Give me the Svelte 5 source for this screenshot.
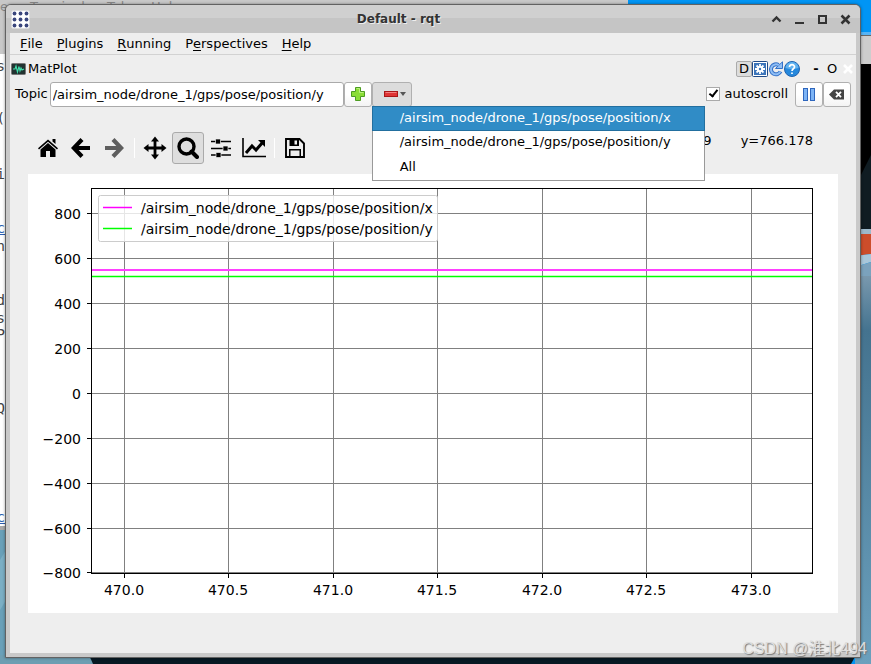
<script>
  const topics = ['/airsim_node/drone_1/gps/pose/position/x', '/airsim_node/drone_1/gps/pose/position/y'];
  const menus = [['', 'F', 'ile'], ['', 'P', 'lugins'], ['', 'R', 'unning'], ['P', 'e', 'rspectives'], ['', 'H', 'elp']];
  const xs = [[96, '470.0'], [200, '470.5'], [305, '471.0'], [409, '471.5'], [514, '472.0'], [618, '472.5'], [723, '473.0']];
  const ys = [[39, '800'], [84, '600'], [129, '400'], [174, '200'], [219, '0'], [264, '−200'], [309, '−400'], [354, '−600'], [398, '−800']];
  const dots = [3, 9, 15];
  const fragments = [['s', 57], ['(', 109], ['i', 165], ['c', 219, 1], ['n', 237], ['d', 291], ['s', 309], ['P', 325], ['Q', 399], ['c', 508, 1]];
  let topic = $state(topics[1]);
  let autoscroll = $state(true);
</script>

<div class="desktop">
  <svg class="wallpaper" viewBox="0 0 871 664" preserveAspectRatio="none" aria-hidden="true">
    <defs>
      <linearGradient id="sea" x1="0" y1="0" x2="0" y2="1">
        <stop offset="0" stop-color="#7d9bb0" /><stop offset=".15" stop-color="#44738f" /><stop offset="1" stop-color="#6ba0bd" />
      </linearGradient>
    </defs>
    <rect width="871" height="664" fill="#0095f5" />
    <rect x="855" y="32" width="16" height="4" fill="#56b4f5" />
    <rect x="855" y="35" width="16" height="30" fill="#cdcdcd" />
    <path d="M855 35.500H871" stroke="#666" />
    <rect x="855" y="64" width="16" height="166" fill="#000" />
    <path d="M861 175L871 155V230H861Z" fill="#101c22" />
    <rect x="855" y="272" width="16" height="392" fill="url(#sea)" />
    <path d="M855 229H871V234H855Z" fill="#9db9cb" />
    <path d="M855 234H871V254L855 256Z" fill="#cc4d2b" />
    <path d="M855 256L871 254V262L855 267Z" fill="#a9c7da" />
    <path d="M855 267L871 262V276H855Z" fill="#7ba2bd" />
    <path d="M0 528H20V664H0Z" fill="#69a0b9" />
    <path d="M0 560L6 550V600L0 610Z" fill="#7bafc5" />
    <path d="M0 655H94V664H0Z" fill="#6d9eb2" />
    <path d="M89 655H856L851 664H93Z" fill="#071923" />
  </svg>

  <div class="behind" aria-hidden="true">
    <div class="behind-bar"><span>e</span><span>Terminal</span><span>Tab</span><span>Help</span></div>
    {#each fragments as [t, y, link]}
      <span class="fragment" class:link style="top:{y}px">{t}</span>
    {/each}
  </div>

  <main class="window">
    <header class="titlebar">
      <svg class="app" width="19" height="19" viewBox="0 0 19 19" aria-hidden="true">
        <rect x=".5" y=".5" width="18" height="18" rx="2" fill="#fff" stroke="#ddd" />
        {#each dots as y}{#each dots as x}<circle cx={x + .5} cy={y + .5} r="1.9" fill="#39457c" />{/each}{/each}
      </svg>
      <h1>Default - rqt</h1>
      <div class="winbtns">
        <button aria-label="Roll up"><svg width="11" height="11" viewBox="0 0 11 11"><path d="M1.500 7.500L5.500 3.500L9.500 7.500" fill="none" stroke="#333" stroke-width="2.400" /></svg></button>
        <button aria-label="Minimize"><svg width="11" height="11" viewBox="0 0 11 11"><path d="M1 9H10" stroke="#333" stroke-width="2" /></svg></button>
        <button aria-label="Maximize"><svg width="11" height="11" viewBox="0 0 11 11"><rect x="2" y="2" width="7" height="7" fill="none" stroke="#333" stroke-width="2" /></svg></button>
        <button aria-label="Close"><svg width="11" height="11" viewBox="0 0 11 11"><path d="M1.500 1.500L9.500 9.500M9.500 1.500L1.500 9.500" stroke="#333" stroke-width="2.500" /></svg></button>
      </div>
    </header>

    <div class="content">
      <nav class="menubar">
        {#each menus as [a, u, b]}<button>{a}<u>{u}</u>{b}</button>{/each}
      </nav>

      <div class="dock">
        <svg width="15" height="12" viewBox="0 0 15 12" aria-hidden="true">
          <rect x=".5" y=".5" width="14" height="11" rx="1" fill="#223331" stroke="#777" />
          <path d="M2 6H4L5 3L6.500 9L8 3.500L9 8L10 5L11 7L13 6" fill="none" stroke="#42e0ad" stroke-width="1.100" />
        </svg>
        <h2>MatPlot</h2>
        <div class="dock-tools">
          <button class="d">D</button>
          <button aria-label="Settings"><svg width="16" height="16" viewBox="0 0 16 16"><rect x=".5" y=".5" width="15" height="15" rx="1" fill="#fff" stroke="#204a87" /><rect x="2" y="2" width="12" height="12" fill="#3b74ba" /><path d="M8 3V13M3 8H13M4.500 4.500L11.500 11.500M11.500 4.500L4.500 11.500" stroke="#fff" stroke-width="1.800" /><circle cx="8" cy="8" r="3.200" fill="#fff" /><circle cx="8" cy="8" r="1.200" fill="#3b74ba" /></svg></button>
          <button aria-label="Reload"><svg width="16" height="16" viewBox="0 0 16 16"><path d="M10.500 4A5 5 0 1 0 12.500 10.500" fill="none" stroke="#3572c8" stroke-width="4" /><path d="M7.500 7.500H14.500V.8Z" fill="#8fbef5" stroke="#3572c8" stroke-linejoin="round" /><path d="M10.800 4.200A5 5 0 1 0 12.300 10.800" fill="none" stroke="#8fbef5" stroke-width="2" /></svg></button>
          <button aria-label="Help"><svg width="16" height="16" viewBox="0 0 16 16"><circle cx="8" cy="8" r="7.500" fill="#2688dc" stroke="#2163ae" /><path d="M1.500 7A6.500 6 0 0 1 14.500 7Q8 9 1.500 7Z" fill="#62b3f0" /><path d="M5.500 6C5.500 2.800 10.700 3 10.500 6C10.400 7.800 8 7.800 8 10M8 11.500V13" fill="none" stroke="#fff" stroke-width="1.700" /></svg></button>
          <button class="dash"><b>-</b></button>
          <button class="o">O</button>
          <button aria-label="Close panel"><svg width="10" height="10" viewBox="0 0 10 10"><path d="M1 1L9 9M9 1L1 9" stroke="#fff" stroke-width="2.600" /></svg></button>
        </div>
      </div>

      <div class="topicbar">
        <label class="name" for="topic">Topic</label>
        <input id="topic" type="text" bind:value={topic} />
        <button class="tool add" aria-label="Add topic"><svg width="14" height="14" viewBox="0 0 14 14"><path d="M4.500 .5H9.500V4.500H13.500V9.500H9.500V13.500H4.500V9.500H.5V4.500H4.500Z" fill="#8add36" stroke="#4d9c22" /><path d="M5.500 1.500H8.500V5.500H12.500" fill="none" stroke="#bcf27e" /></svg></button>
        <div class="remove">
          <button class="tool pressed" aria-label="Remove topic" aria-expanded="true">
            <svg width="14" height="6" viewBox="0 0 14 6"><rect x=".5" y=".5" width="13" height="5" fill="#df3434" stroke="#a81616" /><path d="M1.500 1.500H12.500" stroke="#f28080" /></svg>
            <svg width="6" height="4" viewBox="0 0 6 4"><path d="M0 0H6L3 4Z" fill="#555" /></svg>
          </button>
          <div class="popup" role="menu">
            {#each [...topics, 'All'] as item, i}<button role="menuitem" class:active={i === 0}>{item}</button>{/each}
          </div>
        </div>
        <label class="auto"><input type="checkbox" bind:checked={autoscroll} />autoscroll</label>
        <button class="tool pause" aria-label="Pause"><svg width="12" height="13" viewBox="0 0 12 13"><g fill="#7db4f5" stroke="#2e66bd"><rect x=".5" y=".5" width="4" height="12" /><rect x="7.500" y=".5" width="4" height="12" /></g></svg></button>
        <button class="tool clear" aria-label="Clear"><svg width="16" height="11" viewBox="0 0 16 11"><path d="M5 .5H15V10.500H5L0 5.500Z" fill="#444" /><path d="M7 2.800L12 8.200M12 2.800L7 8.200" stroke="#fff" stroke-width="1.800" /></svg></button>
      </div>

      <div class="plotbar">
        <button aria-label="Home"><svg width="22" height="20" viewBox="0 0 22 20"><path d="M11 5L18.500 11.500V19H13V13H9V19H3.500V11.500ZM1 10.300L11 1.600L21 10.300L20 11.500L11 3.800L2 11.500ZM15.500 1H18.500V6L15.500 3.500Z" /></svg></button>
        <button aria-label="Back"><svg width="20" height="20" viewBox="0 0 20 20"><path d="M11 1.500L2.800 10L11 18.500M3 10H19" fill="none" stroke="#000" stroke-width="4.200" /></svg></button>
        <button aria-label="Forward" disabled><svg width="20" height="20" viewBox="0 0 20 20"><path d="M9 1.500L17.200 10L9 18.500M17 10H1" fill="none" stroke="#5e5e5e" stroke-width="4.200" /></svg></button>
        <i></i>
        <button aria-label="Pan"><svg width="24" height="24" viewBox="0 0 24 24"><path d="M12 3V21M3 12H21" stroke="#000" stroke-width="2.800" /><path d="M12 .5L16 5.500H8ZM12 23.500L8 18.500H16ZM.5 12L5.500 8V16ZM23.500 12L18.500 16V8Z" /></svg></button>
        <button class="on" aria-label="Zoom"><svg width="22" height="22" viewBox="0 0 22 22"><circle cx="9.500" cy="9.500" r="7.500" fill="none" stroke="#000" stroke-width="3.400" /><path d="M14.500 14.500L20 20" stroke="#000" stroke-width="4" stroke-linecap="round" /></svg></button>
        <button aria-label="Subplots"><svg width="20" height="20" viewBox="0 0 20 20"><path d="M0 3.500H20M0 10.500H20M0 17H20" stroke="#000" stroke-width="1.600" /><path d="M4.500 1H9.500V6H4.500ZM12 8H17V13H12ZM5 14.500H10V19.500H5Z" stroke="#eee" stroke-width=".7" /></svg></button>
        <button aria-label="Customize"><svg width="24" height="20" viewBox="0 0 24 20"><path d="M1 0V18.500H24" fill="none" stroke="#000" stroke-width="1.600" /><path d="M4 15L10 8L14 12L21 4" fill="none" stroke="#000" stroke-width="3" /><path d="M16 2H23V9Z" /></svg></button>
        <i></i>
        <button aria-label="Save"><svg width="20" height="20" viewBox="0 0 20 20"><path d="M1 1H14.500L19 5.500V19H1Z" fill="none" stroke="#000" stroke-width="1.900" /><path d="M4.500 1H14V8H4.500ZM4 11H16V19H4Z" /><path d="M9.500 2.500H12V6.500H9.500ZM5.500 12.500H14.500V18H5.500Z" fill="#eee" /></svg></button>
        <output><span>x=472.799</span><span>y=766.178</span></output>
      </div>

      <svg class="figure" viewBox="0 0 810 439" role="img" aria-label="Position plot">
        <rect width="810" height="439" fill="#fff" />
        <g stroke="#808080">
          {#each xs as [x]}<path d="M{x + .5} 14V399" />{/each}
          {#each ys as [y]}<path d="M64 {y + .5}H784" />{/each}
        </g>
        <path d="M64 96H784" stroke="#ff40ff" stroke-width="2" />
        <path d="M64 102.500H784" stroke="#00ff00" stroke-width="1.500" />
        <rect x="63.500" y="14.500" width="721" height="385" fill="none" stroke="#000" />
        <g stroke="#000">
          {#each xs as [x]}<path d="M{x + .5} 399V404" />{/each}
          {#each ys as [y]}<path d="M59 {y + .5}H64" />{/each}
        </g>
        <g text-anchor="middle">{#each xs as [x, t]}<text {x} y="421">{t}</text>{/each}</g>
        <g text-anchor="end">{#each ys as [y, t]}<text x="53" y={y + 6}>{t}</text>{/each}</g>
        <rect x="70.500" y="21.500" width="339" height="46" rx="2" fill="#fff" fill-opacity=".8" stroke="#ccc" />
        <path d="M75 33.500H104" stroke="#ff00ff" stroke-width="1.500" />
        <path d="M75 54.500H104" stroke="#00ff00" stroke-width="1.500" />
        {#each topics as t, i}<text x="113" y={39 + i * 21}>{t}</text>{/each}
      </svg>
    </div>
  </main>
  <span class="watermark">CSDN @淮北494</span>
</div>

<style>
  :global(body) { margin: 0; }
  .desktop { position: relative; min-height: 100vh; box-sizing: border-box; padding: 4px 10px 6px 5px; overflow: hidden; display: flex; font: 13px/16px "DejaVu Sans", sans-serif; color: #000; }
  .wallpaper { position: absolute; inset: 0; width: 100%; height: 100%; }
  button { font: inherit; color: inherit; background: none; border: 0; padding: 0; margin: 0; display: flex; align-items: center; justify-content: center; box-sizing: border-box; }
  svg { display: block; flex: none; }
  .behind { position: absolute; left: 0; top: 0; width: 628px; height: 530px; background: #fff; border-bottom: 4px solid #aaa; overflow: hidden; box-sizing: border-box; }
  .behind-bar { height: 54px; background: #c8c8c8; color: #888; display: flex; gap: 22px; line-height: 14px; }
  .fragment { position: absolute; right: 623px; color: #444; font: 14px/18px "DejaVu Sans Mono", monospace; }
  .fragment.link { color: #2a5db0; text-decoration: underline; }
  .window { position: relative; flex: 1; min-width: 0; box-sizing: border-box; display: flex; flex-direction: column; border: 1px solid #626262; border-radius: 6px 6px 0 0; background: #c9c9c9; padding: 0 4px 4px; box-shadow: 0 0 3px #0006; }
  .titlebar { height: 28px; display: flex; align-items: center; margin: 0 -4px; padding: 0 9px 0 5px; border-radius: 5px 5px 0 0; background: linear-gradient(#d0d0d0 0 13px, #c5c5c5 13px); }
  .titlebar h1 { flex: 1; margin: 0; font-size: 12px; text-align: center; color: #333; padding-right: 4px; text-shadow: 1px 1px #eee; }
  .winbtns { display: flex; gap: 12px; }
  .content { flex: 1; background: #eee; }
  .menubar { height: 22px; box-sizing: border-box; display: flex; gap: 14px; padding-left: 10px; border-bottom: 1px solid #d2d2d2; }
  .menubar u { text-underline-offset: 2px; }
  .dock { height: 27px; display: flex; align-items: center; gap: 2px; padding-left: 1px; }
  .dock h2 { font-size: 13px; font-weight: normal; margin: 0; flex: 1; }
  .dock-tools { display: flex; align-items: center; padding-right: 3px; }
  .dock-tools .d { width: 16px; height: 16px; border: 1px solid #aaa; border-radius: 2px; background: #ddd; }
  .dash { width: 12px; margin-left: 10px; }
  .o { width: 20px; margin-right: 1px; }
  .topicbar { height: 24px; display: flex; align-items: center; padding: 0 5px; }
  .name { margin-right: 2px; }
  .topicbar input[type='text'] { width: 294px; height: 25px; box-sizing: border-box; border: 1px solid #aaa; border-radius: 3px; padding: 0 2px; font: inherit; background: #fff; }
  .tool { height: 25px; width: 28px; border: 1px solid #b0b0b0; border-radius: 3px; background: linear-gradient(#fff 50%, #f3f3f3); }
  .remove { position: relative; }
  .tool.pressed { width: 40px; background: #dcdcdc; gap: 2px; padding-left: 6px; }
  .popup { position: absolute; z-index: 2; left: 0; top: 24px; width: 333px; box-sizing: border-box; border: 1px solid #999; background: #fff; }
  .popup button { width: 100%; height: 25px; justify-content: flex-start; padding-left: 27px; }
  .popup .active { background: #308cc6; color: #fff; box-shadow: 0 0 0 1px #226f9f; height: 23px; }
  .auto { margin-left: auto; display: flex; align-items: center; gap: 5px; margin-right: 7px; }
  .auto input { appearance: none; width: 14px; height: 14px; box-sizing: border-box; margin: 0; border: 1px solid #aaa; background: #fff; position: relative; }
  .auto input:checked::after { content: ''; position: absolute; left: 4px; top: 0; width: 3px; height: 7px; border: solid #000; border-width: 0 2px 2px 0; transform: rotate(38deg); }
  .plotbar { height: 68px; padding: 16px 25px 0 22px; box-sizing: border-box; display: flex; align-items: center; gap: 1px; }
  .plotbar button { width: 32px; height: 32px; border: 1px solid transparent; border-radius: 3px; }
  .plotbar .on { background: #dedede; border-color: #aaa; }
  .plotbar i { width: 1px; height: 20px; background: #fff; margin: 0 3px; }
  .plotbar output { margin-left: auto; display: flex; gap: 29px; margin-bottom: 14px; margin-right: 18px; }
  .figure { width: calc(100% - 36px); height: auto; margin: 0 18px 40px; font-size: 14px; }
  .watermark { position: absolute; right: 4px; bottom: 4px; font: 16px/22px "Liberation Sans", "Noto Sans CJK SC", sans-serif; color: #ddd; text-shadow: 1px 1px 1px #777; }
</style>
